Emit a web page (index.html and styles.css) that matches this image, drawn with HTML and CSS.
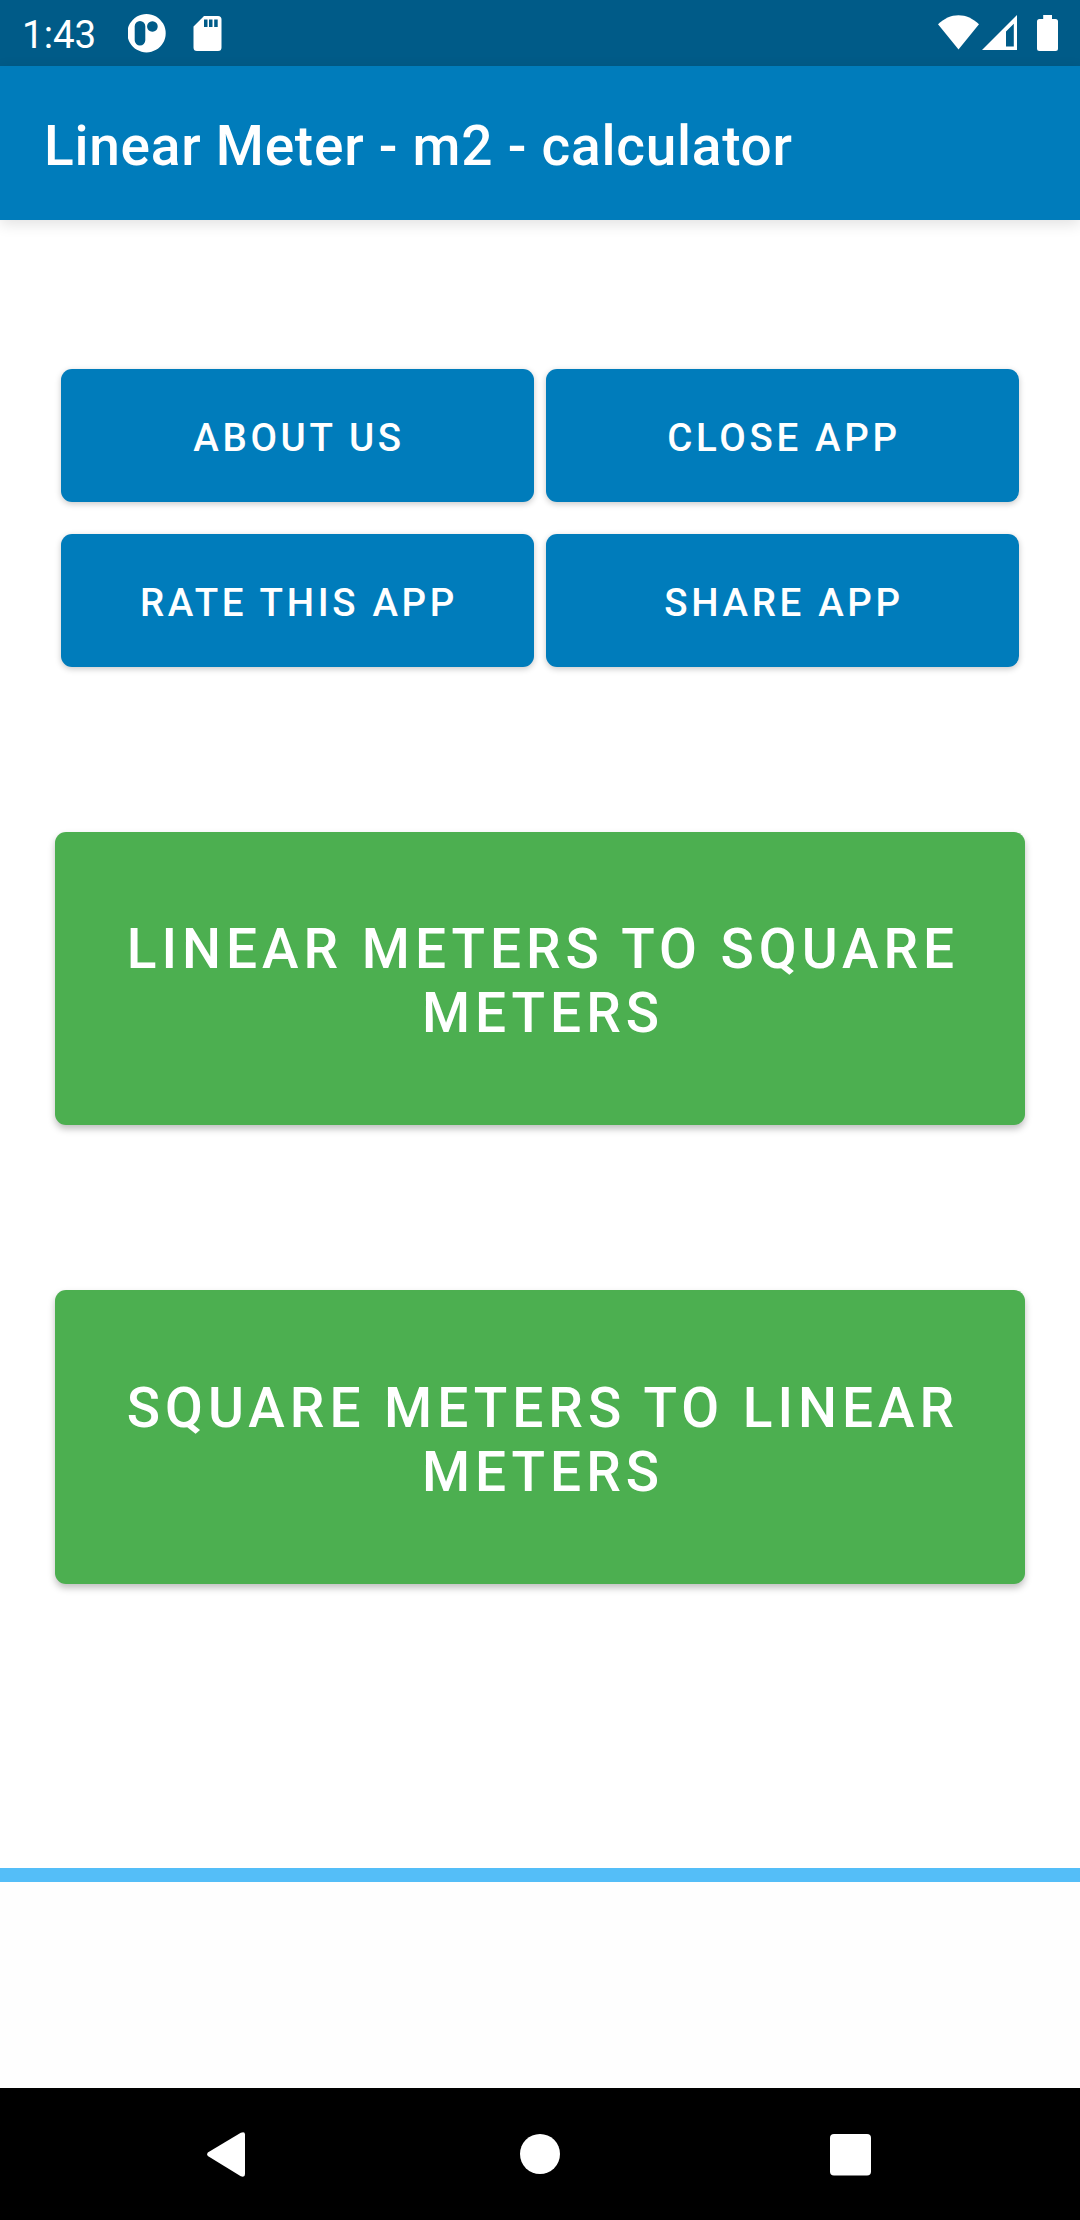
FILE: index.html
```
<!DOCTYPE html>
<html lang="en">
<head>
    <meta charset="UTF-8">
    <meta name="viewport" content="width=device-width, initial-scale=1.0">
    <title>Linear Meter - m2 - calculator</title>
    <link rel="stylesheet" href="styles.css">
</head>
<body>
    <div class="status-bar">
        <span class="clock">1:43</span>
        <svg class="notifications" width="94" height="66" viewBox="128 0 94 66" fill="#fff">
            <path fill-rule="evenodd" d="M146.5 14a19.2 19.2 0 1 0 .01 0zM140 21a5.3 5.3 0 0 1 5.3 5.3v13.9a5.3 5.3 0 0 1-10.6 0V26.3A5.3 5.3 0 0 1 140 21zM152.4 21.2a5.3 5.3 0 1 1-.01 0z"/>
            <path fill-rule="evenodd" d="M204 16h14a3.5 3.5 0 0 1 3.5 3.5v28a3.5 3.5 0 0 1-3.5 3.5h-21a3.5 3.5 0 0 1-3.5-3.5V26.500zM204 19.500v7.500h3.500v-7.500zM209 19.500v7.500h3.500v-7.500zM214.200 19.500v7.500h3.500v-7.500z"/>
        </svg>
        <svg class="system-icons" width="122" height="66" viewBox="938 0 122 66" fill="#fff">
            <path d="M958.500 49.500L938 24.200C944 18.500 951 15.200 958.500 15.200S973 18.500 979 24.200z"/>
            <path fill-rule="evenodd" d="M982 50L1017 15V50zM1006 31.500V46.500H1013.800V23.800z"/>
            <path d="M1043.200 15h8.800v4h3.500a2.500 2.500 0 0 1 2.500 2.500v27a2.500 2.500 0 0 1-2.500 2.500h-16a2.500 2.500 0 0 1-2.500-2.500v-27a2.500 2.500 0 0 1 2.500-2.500h3.700z"/>
        </svg>
    </div>

    <header class="toolbar">
        <h1>Linear Meter - m2 - calculator</h1>
    </header>

    <main>
        <div class="menu">
            <button>About us</button>
            <button>Close app</button>
            <button>Rate this app</button>
            <button>Share app</button>
        </div>

        <div class="converters">
            <button>Linear meters to square meters</button>
            <button>Square meters to linear meters</button>
        </div>
    </main>

    <div class="divider"></div>
    <div class="ad-space"></div>

    <nav class="nav-bar">
        <svg width="40" height="48" viewBox="0 0 40 48" fill="#fff">
            <path d="M1.800 22.600L34.800 2.700Q39 1 39 4.500V44Q39 47.800 34.800 46.200L1.800 26Q.200 24.300 1.800 22.600z"/>
        </svg>
        <svg class="home" width="40" height="40" viewBox="0 0 40 40" fill="#fff">
            <circle cx="20" cy="20" r="20"/>
        </svg>
        <svg width="41" height="44" viewBox="0 0 41 44" fill="#fff">
            <rect y="2" width="41" height="41.500" rx="4"/>
        </svg>
    </nav>
</body>
</html>
```

FILE: styles.css
```
/* Global styles */
* {
    box-sizing: border-box;
}

body {
    font-family: Roboto, sans-serif;
    background-color: #fff;
    color: #fff;
    margin: 0;
    height: 2220px;
    display: flex;
    flex-direction: column;
}

/* Status bar */
.status-bar {
    background-color: #005b88;
    height: 66px;
    padding: 0 20px 0 22px;
    display: flex;
    align-items: center;
}

.clock {
    font-size: 38.5px;
    line-height: 66px;
    width: 106px;
    padding-top: 3px;
}

.system-icons {
    margin-left: auto;
}

/* App toolbar */
.toolbar {
    background-color: #007cbb;
    height: 154px;
    padding: 5px 44px 0;
    display: flex;
    align-items: center;
    box-shadow: 0 4px 14px rgba(0, 0, 0, 0.12);
}

h1 {
    font-size: 55px;
    font-weight: 500;
    letter-spacing: 0.75px;
    line-height: 64px;
    margin: 0;
}

main {
    height: 1648px;
    padding-top: 149px;
}

/* Buttons */
button {
    font-family: inherit;
    font-weight: 500;
    color: #fff;
    letter-spacing: 0.0905em;
    text-transform: uppercase;
    border: none;
    border-radius: 11px;
    cursor: pointer;
}

.menu {
    display: grid;
    grid-template-columns: 1fr 1fr;
    gap: 32px 12px;
    margin: 0 61px;
}

.menu button {
    background-color: #007cbb;
    height: 133px;
    font-size: 38.5px;
    letter-spacing: 0.095em;
    padding: 3px 0 0 3px;
    box-shadow: 0 2px 6px rgba(0, 0, 0, 0.22);
}

.converters {
    display: flex;
    flex-direction: column;
    gap: 165px;
    margin: 165px 55px 0;
}

.converters button {
    background-color: #4caf50;
    height: 293px;
    font-size: 55px;
    line-height: 64px;
    padding: 5px 44px 0 50px;
    box-shadow: 0 4px 7px rgba(0, 0, 0, 0.25);
}

.converters button:last-child {
    height: 294px;
}

/* Line above the ad banner */
.divider {
    background-color: #54bef8;
    height: 14px;
}

.ad-space {
    background-color: #fefefe;
    flex: 1;
}

/* Navigation bar */
.nav-bar {
    background-color: #000;
    height: 132px;
    padding: 0 209px 0 206px;
    display: flex;
    justify-content: space-between;
    align-items: center;
}

.home {
    margin-left: 4px;
}
```
